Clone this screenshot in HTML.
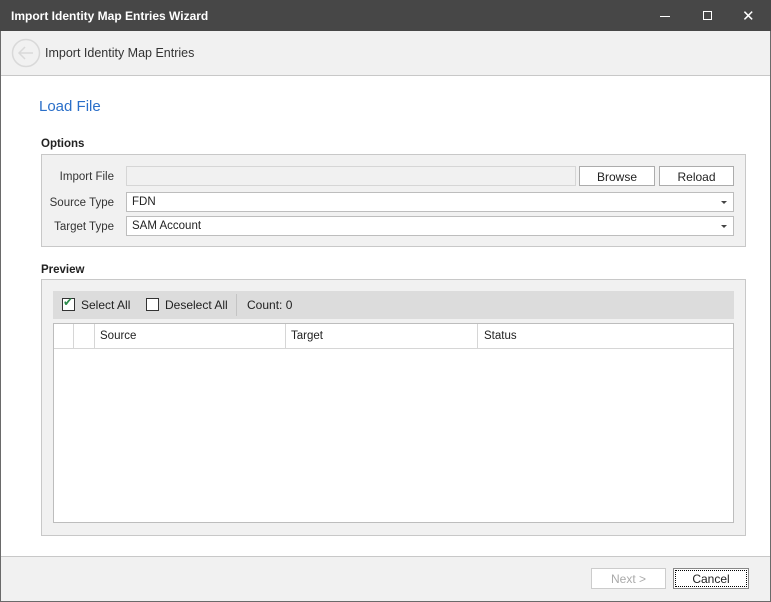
<!DOCTYPE html><html><head><style>
*{margin:0;padding:0;box-sizing:border-box}
body{width:771px;height:602px;position:relative;background:#fff;font-family:"Liberation Sans",sans-serif;font-size:12px;color:#222;overflow:hidden}
.a{position:absolute}
.btn{position:absolute;border:1px solid #acacac;background:#fff;text-align:center;line-height:20px;font-size:12px}
.lbl{position:absolute;font-size:11.5px;color:#333;text-align:right;width:70px}
.inp{position:absolute;border:1px solid #bdbdbd;background:#fff;height:20px;line-height:19px;padding-left:5px;font-size:11.5px}
.arr{position:absolute;right:6px;top:8px;border-left:3px solid transparent;border-right:3px solid transparent;border-top:3px solid #444}
.cb{position:absolute;width:13px;height:13px;border:1px solid #333;background:#fff}
</style></head><body>
<div class="a" style="left:0;top:0;width:771px;height:602px;border:1px solid #6a6a6a"></div>
<div class="a" style="left:0;top:0;width:771px;height:31px;background:#474747;color:#fff;font-weight:bold;font-size:12px;line-height:32px;padding-left:11px">Import Identity Map Entries Wizard</div>
<div class="a" style="left:660px;top:16px;width:10px;height:1px;background:#fff"></div>
<div class="a" style="left:703px;top:11px;width:9px;height:9px;border:1px solid #fff"></div>
<div class="a" style="left:742px;top:7px;color:#fff;font-size:15px">✕</div>
<div class="a" style="left:1px;top:31px;width:769px;height:45px;background:#f1f1f1;border-bottom:1px solid #c8c8c8"></div>
<svg class="a" style="left:11px;top:38px" width="30" height="30"><circle cx="15" cy="15" r="13.5" fill="none" stroke="#d9d9d9" stroke-width="1.5"/><path d="M22 15H8M14 9L8 15L14 21" fill="none" stroke="#d9d9d9" stroke-width="1.5"/></svg>
<div class="a" style="left:45px;top:46px;font-size:12.5px;color:#333">Import Identity Map Entries</div>
<div class="a" style="left:39px;top:98px;font-size:15px;color:#2a6fc9">Load File</div>
<div class="a" style="left:41px;top:138px;font-weight:bold;font-size:11.5px">Options</div>
<div class="a" style="left:41px;top:154px;width:705px;height:93px;border:1px solid #c8c8c8;background:#f1f1f1"></div>
<div class="lbl" style="left:44px;top:171px">Import File</div>
<div class="inp" style="left:126px;top:166px;width:450px;background:#f1f1f1;border-color:#d6d6d6"></div>
<div class="btn" style="left:579px;top:166px;width:76px;height:20px">Browse</div>
<div class="btn" style="left:659px;top:166px;width:75px;height:20px">Reload</div>
<div class="lbl" style="left:44px;top:197px">Source Type</div>
<div class="inp" style="left:126px;top:192px;width:608px">FDN<div class="arr"></div></div>
<div class="lbl" style="left:44px;top:221px">Target Type</div>
<div class="inp" style="left:126px;top:216px;width:608px">SAM Account<div class="arr"></div></div>
<div class="a" style="left:41px;top:264px;font-weight:bold;font-size:11.5px">Preview</div>
<div class="a" style="left:41px;top:279px;width:705px;height:257px;border:1px solid #c8c8c8;background:#f1f1f1"></div>
<div class="a" style="left:53px;top:291px;width:681px;height:28px;background:#dcdcdc"></div>
<div class="cb" style="left:62px;top:298px"></div>
<div class="a" style="left:63px;top:295px;color:#2a8a4a;font-size:12px">✔</div>
<div class="a" style="left:81px;top:298px">Select All</div>
<div class="cb" style="left:146px;top:298px"></div>
<div class="a" style="left:165px;top:298px">Deselect All</div>
<div class="a" style="left:236px;top:294px;width:1px;height:22px;background:#c4c4c4"></div>
<div class="a" style="left:247px;top:298px">Count: 0</div>
<div class="a" style="left:53px;top:323px;width:681px;height:200px;border:1px solid #bdbdbd;background:#fff"></div>
<div class="a" style="left:54px;top:324px;width:679px;height:25px;border-bottom:1px solid #d6d6d6"></div>
<div class="a" style="left:73px;top:324px;width:1px;height:24px;background:#d6d6d6"></div>
<div class="a" style="left:94px;top:324px;width:1px;height:24px;background:#d6d6d6"></div>
<div class="a" style="left:285px;top:324px;width:1px;height:24px;background:#d6d6d6"></div>
<div class="a" style="left:477px;top:324px;width:1px;height:24px;background:#d6d6d6"></div>
<div class="a" style="left:100px;top:330px;font-size:11.5px">Source</div>
<div class="a" style="left:291px;top:330px;font-size:11.5px">Target</div>
<div class="a" style="left:484px;top:330px;font-size:11.5px">Status</div>
<div class="a" style="left:1px;top:556px;width:769px;height:45px;background:#f1f1f1;border-top:1px solid #c8c8c8"></div>
<div class="btn" style="left:591px;top:568px;width:75px;height:21px;color:#aaa;border-color:#ccc">Next &gt;</div>
<div class="btn" style="left:673px;top:568px;width:76px;height:21px;border-color:#888;outline:1px dotted #000;outline-offset:-3px">Cancel</div>
</body></html>
